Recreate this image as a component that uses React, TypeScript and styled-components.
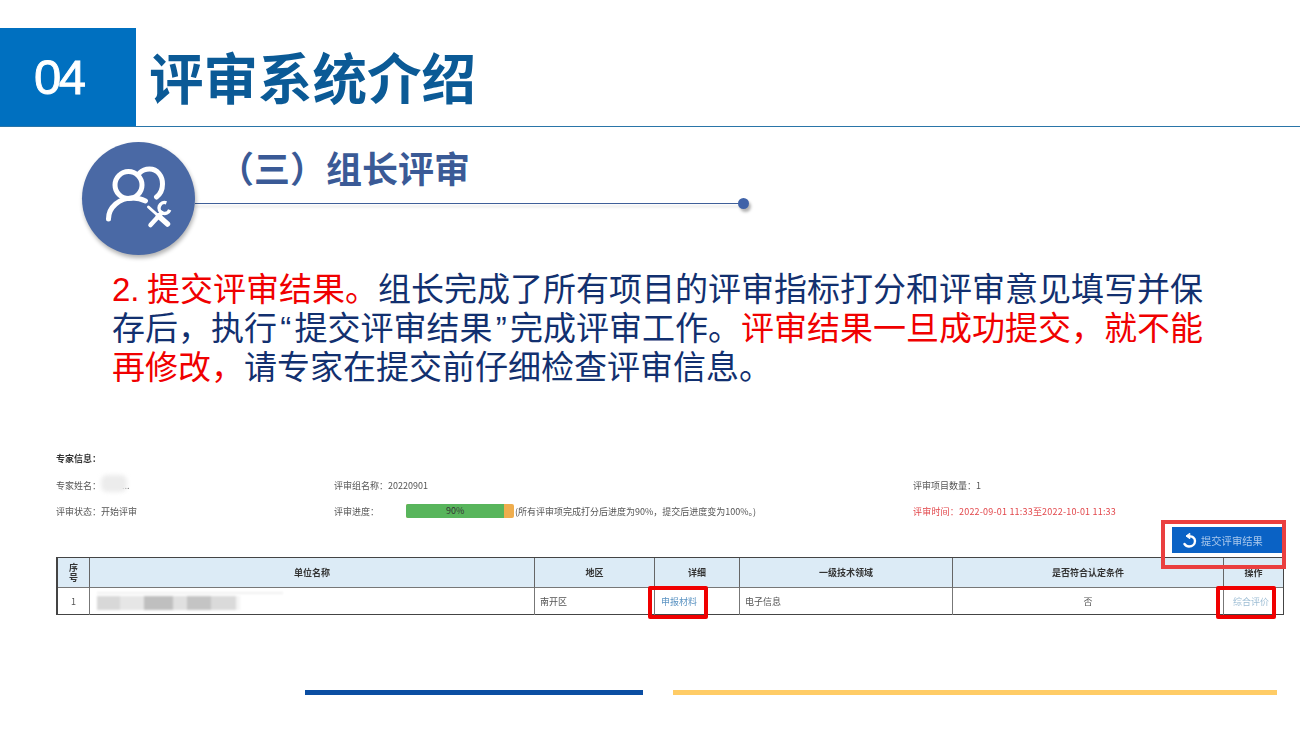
import React from "react";
import styled, { createGlobalStyle } from "styled-components";

const CJK = `"Noto Sans CJK SC", "Liberation Sans", sans-serif`;
const BODY = `"Liberation Sans", "Noto Sans CJK SC", sans-serif`;
const SIM = `"Noto Sans CJK SC", "DejaVu Sans", sans-serif`;

const Global = createGlobalStyle`
  html, body { margin: 0; padding: 0; background: #fff; }
  body { width: 1300px; height: 731px; overflow: hidden; font-family: ${CJK}; }
`;

const Slide = styled.div`
  width: 1300px;
  height: 731px;
  display: flex;
  flex-direction: column;
  padding-top: 28px;
  box-sizing: border-box;
`;

const Header = styled.header`
  height: 99px;
  flex: none;
  display: flex;
  border-bottom: 1px solid #2a75a8;
  box-sizing: border-box;
`;

const NumberBox = styled.div`
  width: 136px;
  background: #0070c0;
  color: #fff;
  font: 400 49px/1 "Liberation Sans", sans-serif;
  -webkit-text-stroke: 0.9px #fff;
  letter-spacing: -2.500px;
  display: flex;
  align-items: center;
  padding: 0 0 0 34px;
  box-sizing: border-box;
`;

const Title = styled.h1`
  margin: -2px 0 0 13px;
  color: #0b5a96;
  font: 700 54.500px/99px ${CJK};
`;

const Section = styled.section`
  height: 115px;
  flex: none;
  margin-top: 15px;
  padding-left: 82px;
  display: flex;
`;

const Badge = styled.div`
  width: 113px;
  height: 113px;
  flex: none;
  border-radius: 50%;
  background: #4a69a5;
  box-shadow: 1px 3px 4px rgba(0, 0, 0, 0.3);
  display: flex;
  align-items: center;
  justify-content: center;
  position: relative;
  z-index: 1;
`;

const SectionBody = styled.div`
  display: flex;
  flex-direction: column;
`;

const SectionTitle = styled.h2`
  margin: 0 0 0 23px;
  height: 48px;
  color: #3a5a96;
  font: 700 36px/50px ${CJK};
`;

const Rule = styled.div`
  width: 549px;
  height: 1px;
  margin-top: 13px;
  background: #3f5f99;
  box-shadow: 0 3px 3px rgba(0, 0, 0, 0.18);
  position: relative;
  &::after {
    content: "";
    position: absolute;
    right: -5px;
    top: -5px;
    width: 11px;
    height: 11px;
    border-radius: 50%;
    background: #3f62a8;
    box-shadow: 2px 3px 3px rgba(0, 0, 0, 0.3);
  }
`;

const Paragraph = styled.p`
  margin: 13px 0 0 112px;
  width: 1095px;
  font: 400 33px/39px ${BODY};
  word-spacing: -1.700px;
  color: #12306f;
`;

const Red = styled.span`
  color: #f00000;
`;

const Quote = styled.span`
  padding: 0 3.250px;
`;

const Shot = styled.div`
  margin: 65px 0 0 56px;
  width: 1228px;
  position: relative;
  filter: blur(0.45px);
  font-family: ${SIM};
  color: #444;
  font-size: 9px;
`;

const Heading = styled.div`
  font-weight: 700;
  height: 26px;
  line-height: 14px;
  color: #333;
`;

const InfoGrid = styled.div`
  display: grid;
  grid-template-columns: 278px 579px 1fr;
  grid-auto-rows: 26px;
  height: 52px;
`;

const InfoCell = styled.div<{ $danger?: boolean }>`
  display: flex;
  align-items: center;
  height: 14px;
  color: ${(p) => (p.$danger ? "#e2474b" : "#555")};
  letter-spacing: ${(p) => (p.$danger ? "0.2px" : "0")};
  white-space: nowrap;
`;

const NameBlur = styled.span`
  width: 26px;
  height: 17px;
  margin: -3px -5px 0 0;
  border-radius: 6px;
  background: #ececec;
  filter: blur(2px);
`;

const Progress = styled.div`
  width: 108px;
  height: 14px;
  flex: none;
  display: flex;
  border-radius: 2px;
  overflow: hidden;
  background: #efad4d;
  margin: 0 1px 0 27px;
`;

const ProgressFill = styled.div`
  width: 91%;
  background: #58b55c;
  color: #333;
  text-align: center;
  line-height: 14px;
`;

const ButtonRow = styled.div`
  height: 30px;
  display: flex;
  justify-content: flex-end;
  align-items: flex-start;
  margin-top: -3px;
`;

const SubmitButton = styled.div`
  width: 110px;
  height: 26px;
  margin: 0 2px 0 0;
  display: flex;
  align-items: center;
  gap: 4px;
  padding-left: 11px;
  box-sizing: border-box;
  background: #0a62c5;
  color: #a9c8ec;
  font-size: 10.300px;
  position: relative;
  z-index: 1;
`;

const Table = styled.div`
  display: grid;
  grid-template-columns: 32px 445px 120px 85px 213px 271px 59px;
  grid-template-rows: 30px 27px;
  border: 1px solid #444;
  border-width: 1px 1px 1px 2px;
  box-sizing: border-box;
  height: 58px;
`;

const HeadCell = styled.div`
  background: #dcebf6;
  border-right: 1px solid #666;
  border-bottom: 1px solid #777;
  display: flex;
  align-items: center;
  justify-content: center;
  text-align: center;
  font-weight: 700;
  color: #333;
  line-height: 10px;
  &:nth-child(7) { border-right: 0; }
`;

const Cell = styled.div<{ $pad?: number; $link?: "strong" | "faint" }>`
  border-right: 1px solid #777;
  display: flex;
  align-items: center;
  justify-content: ${(p) => (p.$pad !== undefined ? "flex-start" : "center")};
  padding-left: ${(p) => p.$pad ?? 0}px;
  color: ${(p) =>
    p.$link === "strong" ? "#5b93c2" : p.$link === "faint" ? "#9dbdd4" : "#555"};
  &:last-child { border-right: 0; }
`;

const BlurName = styled.div`
  width: 143px;
  height: 14px;
  margin-top: 2px;
  position: relative;
  background: linear-gradient(90deg, #d8d8d8 0 16%, #e6e6e6 16% 33%, #bfbfbf 33% 53%, #e0e0e0 53% 63%, #c4c4c4 63% 80%, #dadada 80% 97%, #f4f4f4 97% 100%);
  filter: blur(1.200px);
  &::after {
    content: "";
    position: absolute;
    left: 0;
    top: -4px;
    width: 186px;
    height: 2px;
    background: #f0f0f0;
  }
`;

const Mark = styled.div<{ $l: number; $t: number; $w: number; $h: number; $soft?: boolean }>`
  position: absolute;
  left: ${(p) => p.$l}px;
  top: ${(p) => p.$t}px;
  width: ${(p) => p.$w}px;
  height: ${(p) => p.$h}px;
  box-sizing: border-box;
  border: 4px solid ${(p) => (p.$soft ? "#ea3f3f" : "#f00000")};
  border-radius: ${(p) => (p.$soft ? 0 : 2)}px;
  z-index: 2;
`;

const Footer = styled.footer`
  margin: 75px 0 0 305px;
  display: flex;
  gap: 30px;
`;

const Bar = styled.div<{ $w: number; $c: string }>`
  width: ${(p) => p.$w}px;
  height: 5px;
  background: ${(p) => p.$c};
`;

const TeamIcon = () => (
  <svg width="90" height="75" viewBox="-1.500 1 90 75" fill="none" stroke="#fff" strokeLinecap="round" strokeLinejoin="round">
    <circle cx="33" cy="25" r="13.500" strokeWidth="5" />
    <path d="M44 13C47 10 50 9 54 9C62 9 67 16 67 24C67 30 65 34 61 37" strokeWidth="5" />
    <path d="M13 59C13 47 24 38 37 38C42 38 46 39 50 41" strokeWidth="5" />
    <path d="M53 47 63 56" strokeWidth="3" />
    <path d="M63 56 72 64" strokeWidth="5.500" />
    <path d="M66 53 55 65" strokeWidth="4.500" />
    <path d="M70.900 42.800A5.500 5.500 0 1 0 74.200 49.900" strokeWidth="3.500" strokeLinecap="butt" />
  </svg>
);

const RefreshIcon = () => (
  <svg width="14" height="16" viewBox="0 0 14 16" fill="none" stroke="#fff" strokeWidth="2.400" strokeLinecap="round">
    <path d="M6 4.500C9.500 4 12 6 12 9C12 12 9.500 14.500 6 14.500C4 14.500 2.500 13.500 1.500 12" />
    <path d="M6.500 1.500 3 4 6.500 6.500z" fill="#fff" strokeWidth="1" />
  </svg>
);

export default function App() {
  return (
    <Slide>
      <Global />
      <Header>
        <NumberBox>04</NumberBox>
        <Title>评审系统介绍</Title>
      </Header>
      <Section>
        <Badge>
          <TeamIcon />
        </Badge>
        <SectionBody>
          <SectionTitle>（三）组长评审</SectionTitle>
          <Rule />
        </SectionBody>
      </Section>
      <Paragraph>
        <Red>2. 提交评审结果。</Red>组长完成了所有项目的评审指标打分和评审意见填写并保存后，执行<Quote>“</Quote>提交评审结果<Quote>”</Quote>完成评审工作。
        <Red>评审结果一旦成功提交，就不能再修改，</Red>请专家在提交前仔细检查评审信息。
      </Paragraph>
      <Shot>
        <Heading>专家信息：</Heading>
        <InfoGrid>
          <InfoCell>专家姓名：<NameBlur />...</InfoCell>
          <InfoCell>评审组名称：20220901</InfoCell>
          <InfoCell>评审项目数量：1</InfoCell>
          <InfoCell>评审状态：开始评审</InfoCell>
          <InfoCell>
            评审进度：
            <Progress>
              <ProgressFill>90%</ProgressFill>
            </Progress>
            (所有评审项完成打分后进度为90%，提交后进度变为100%。)
          </InfoCell>
          <InfoCell $danger>评审时间：2022-09-01 11:33至2022-10-01 11:33</InfoCell>
        </InfoGrid>
        <ButtonRow>
          <SubmitButton>
            <RefreshIcon />
            提交评审结果
          </SubmitButton>
        </ButtonRow>
        <Table>
          <HeadCell>序<br />号</HeadCell>
          <HeadCell>单位名称</HeadCell>
          <HeadCell>地区</HeadCell>
          <HeadCell>详细</HeadCell>
          <HeadCell>一级技术领域</HeadCell>
          <HeadCell>是否符合认定条件</HeadCell>
          <HeadCell>操作</HeadCell>
          <Cell>1</Cell>
          <Cell $pad={7}><BlurName /></Cell>
          <Cell $pad={5}>南开区</Cell>
          <Cell $pad={6} $link="strong">申报材料</Cell>
          <Cell $pad={5}>电子信息</Cell>
          <Cell>否</Cell>
          <Cell $pad={9} $link="faint">综合评价</Cell>
        </Table>
        <Mark $soft $l={1105} $t={68} $w={125} $h={49} />
        <Mark $l={592} $t={134} $w={60} $h={33} />
        <Mark $l={1160} $t={134} $w={60} $h={33} />
      </Shot>
      <Footer>
        <Bar $w={338} $c="#0b4ea2" />
        <Bar $w={604} $c="#ffcc66" />
      </Footer>
    </Slide>
  );
}
